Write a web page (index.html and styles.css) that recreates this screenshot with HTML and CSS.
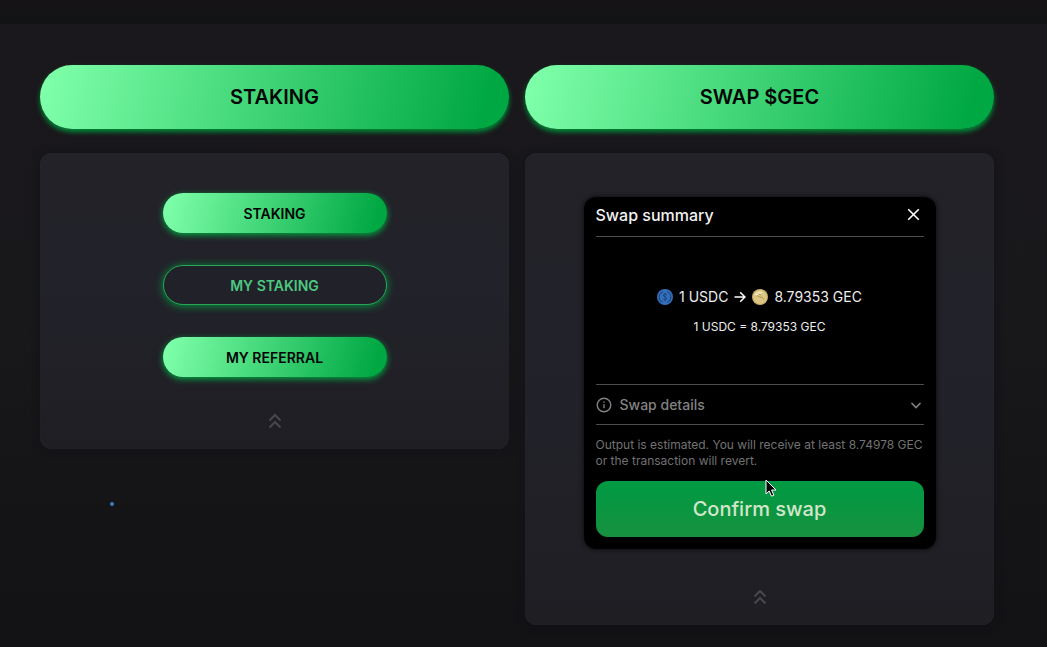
FILE: index.html
```html
<!DOCTYPE html>
<html lang="en">
<head>
<meta charset="utf-8">
<meta name="viewport" content="width=device-width, initial-scale=1">
<title>Staking and swap</title>
<link rel="stylesheet" href="styles.css">
</head>
<body>
<header class="topbar"></header>
<main class="board">
  <section class="column">
    <button class="pill pill-large" type="button">STAKING</button>
    <div class="panel">
      <button class="pill" type="button">STAKING</button>
      <button class="pill pill-outline" type="button">MY STAKING</button>
      <button class="pill" type="button">MY REFERRAL</button>
      <button class="collapse" type="button" aria-label="Collapse staking">
        <svg width="24" height="24" viewBox="0 0 24 24"><path d="M6.500 11.500 12 6l5.500 5.500M6.500 18.500 12 13l5.500 5.500"/></svg>
      </button>
    </div>
  </section>
  <section class="column">
    <button class="pill pill-large" type="button">SWAP $GEC</button>
    <div class="panel">
      <div class="widget">
        <div class="widget-head">
          <h2 class="widget-title">Swap summary</h2>
          <button class="close" type="button" aria-label="Close">
            <svg width="20" height="20" viewBox="0 0 20 20"><path d="M4.200 4.200l10.600 10.600M14.800 4.200l-10.600 10.600"/></svg>
          </button>
        </div>
        <div class="summary">
          <div class="pair">
            <svg class="coin" width="16" height="16" viewBox="0 0 16 16">
              <circle cx="8" cy="8" r="8" fill="#3470bb"/>
              <path d="M6 2.700a5.600 5.600 0 0 0 0 10.600M10 2.700a5.600 5.600 0 0 1 0 10.600" fill="none" stroke="#1b4682" stroke-width="1.100"/>
              <path d="M9.800 6.300C9.500 4.400 6.200 4.500 6.300 6.300c.1 1.900 3.500 1.300 3.500 3.300 0 1.800-3.300 1.900-3.600 0M8 3.800v8.400" fill="none" stroke="#1b4682" stroke-width="1"/>
            </svg>
            <span>1 USDC</span>
            <svg class="arrow" width="12" height="12" viewBox="0 0 12 12"><path d="M.5 6h10.500M6.200 1.200 11 6l-4.800 4.800"/></svg>
            <svg class="coin" width="16" height="16" viewBox="0 0 16 16">
              <circle cx="8" cy="8" r="8" fill="#c9b16c"/>
              <circle cx="8" cy="8" r="6.800" fill="#dcc683"/>
              <path d="M2.500 6C4 2.500 8 1.500 11 3L6 7z" fill="#ece3b8"/>
              <path d="M4.500 7c2-.8 3 1.300 4.500 1.300s2.300 1 2.500 2.200M6.500 5l2.500 1" fill="none" stroke="#b2954d" stroke-width="1"/>
            </svg>
            <span>8.79353 GEC</span>
          </div>
          <div class="rate">1 USDC = 8.79353 GEC</div>
        </div>
        <button class="details" type="button">
          <svg width="16" height="16" viewBox="0 0 16 16"><circle cx="8" cy="8" r="6.800"/><path d="M8 7.200v4M8 4.500v1.300"/></svg>
          <span class="details-label">Swap details</span>
          <svg width="16" height="16" viewBox="0 0 16 16"><path d="M3.500 6 8 10.500 12.500 6"/></svg>
        </button>
        <p class="note">Output is estimated. You will receive at least 8.74978 GEC or the transaction will revert.</p>
        <div class="action">
          <button class="confirm" type="button">Confirm swap</button>
          <svg class="pointer" width="12" height="19" viewBox="0 0 12 19"><path d="M1 1v14l3.200-3 2.300 5.200 2.400-1-2.300-5.200H11z"/></svg>
        </div>
      </div>
      <button class="collapse" type="button" aria-label="Collapse swap">
        <svg width="24" height="24" viewBox="0 0 24 24"><path d="M6.500 11.500 12 6l5.500 5.500M6.500 18.500 12 13l5.500 5.500"/></svg>
      </button>
    </div>
  </section>
</main>
<span class="spark"></span>
</body>
</html>
```
FILE: styles.css
```css
* { box-sizing: border-box; }
body {
  margin: 0;
  min-height: 100vh;
  background: #121114;
  color: #fff;
  font-family: Inter, "Liberation Sans", sans-serif;
}
button { margin: 0; padding: 0; border: 0; background: none; font-family: inherit; cursor: pointer; }
svg { display: block; fill: none; }
.topbar { height: 24px; background: linear-gradient(#151316, #121314); }
.board {
  display: grid;
  grid-template-columns: 1fr 1fr;
  align-items: start;
  gap: 16px;
  padding: 40px 53px 22px 40px;
  border-top: 1px solid #19191a;
  background: linear-gradient(#1a181c, #18171a 50%, #121114);
}
.column { display: flex; flex-direction: column; gap: 24px; }
.pill {
  width: 224px;
  height: 40px;
  border-radius: 20px;
  background: linear-gradient(104deg, #7effa9 2%, #00a843 94%);
  box-shadow: 0 2px 6px #00a843;
  color: #020503;
  font-size: 14px;
  font-weight: 600;
}
.pill-large {
  width: 100%;
  height: 64px;
  border-radius: 32px;
  box-shadow: 0 3px 5px #008c38;
  font-size: 20px;
}
.pill-outline {
  border: 1px solid #25a755;
  background: #212129;
  box-shadow: 0 1px 8px #079441;
  color: #4dc880;
}
.panel {
  display: flex;
  flex-direction: column;
  align-items: center;
  gap: 32px;
  padding: 40px 16px 16px;
  border-radius: 12px;
  background: linear-gradient(#232228, #22222a 45%, #1f1e23);
  box-shadow: inset 0 0 1px #35343a, 0 0 8px #131217;
}
.collapse { color: #48464e; }
.collapse path { stroke: currentColor; stroke-width: 2; }
.widget {
  display: flex;
  flex-direction: column;
  width: 352px;
  max-width: 100%;
  min-height: 352px;
  margin: 4px 0;
  padding: 0 12px 12px;
  border-radius: 12px;
  background: #000;
  box-shadow: 0 0 5px #08080a;
}
.widget-head {
  display: flex;
  align-items: flex-start;
  justify-content: space-between;
  height: 40px;
  padding-top: 8px;
  border-bottom: 1px solid #4c4c4c;
}
.widget-title { margin: 0; font-size: 16px; line-height: 20px; font-weight: 500; color: #f2f2f2; }
.close path { stroke: #fff; stroke-width: 1.600; }
.summary {
  flex: 1;
  display: flex;
  flex-direction: column;
  align-items: center;
  justify-content: center;
  gap: 12px;
  color: #ededed;
}
.pair { display: flex; align-items: center; gap: 6px; font-size: 14px; line-height: 20px; }
.arrow path { stroke: #fff; stroke-width: 1.500; }
.rate { font-size: 12px; line-height: 16px; }
.details {
  display: flex;
  align-items: center;
  gap: 8px;
  height: 41px;
  border-top: 1px solid #4c4c4c;
  border-bottom: 1px solid #4c4c4c;
  color: #828282;
  font-size: 14px;
  font-weight: 500;
  text-align: left;
}
.details svg { stroke: currentColor; stroke-width: 1.600; }
.details svg:first-child { stroke-width: 1.400; }
.details-label { flex: 1; }
.note { margin: 12px 0; color: #727272; font-size: 12px; line-height: 16px; }
.action { position: relative; }
.confirm {
  width: 100%;
  height: 56px;
  border-radius: 12px;
  background: linear-gradient(#009a43, #17913f);
  color: #d2e6cb;
  font-size: 20px;
  font-weight: 500;
}
.pointer { position: absolute; left: 169px; top: -2px; pointer-events: none; }
.pointer path { fill: #000; stroke: #fff; stroke-width: 1; }
.spark {
  position: absolute;
  left: 110px;
  top: 502px;
  width: 4px;
  height: 4px;
  border-radius: 2px;
  background: #3580c7;
}
```
